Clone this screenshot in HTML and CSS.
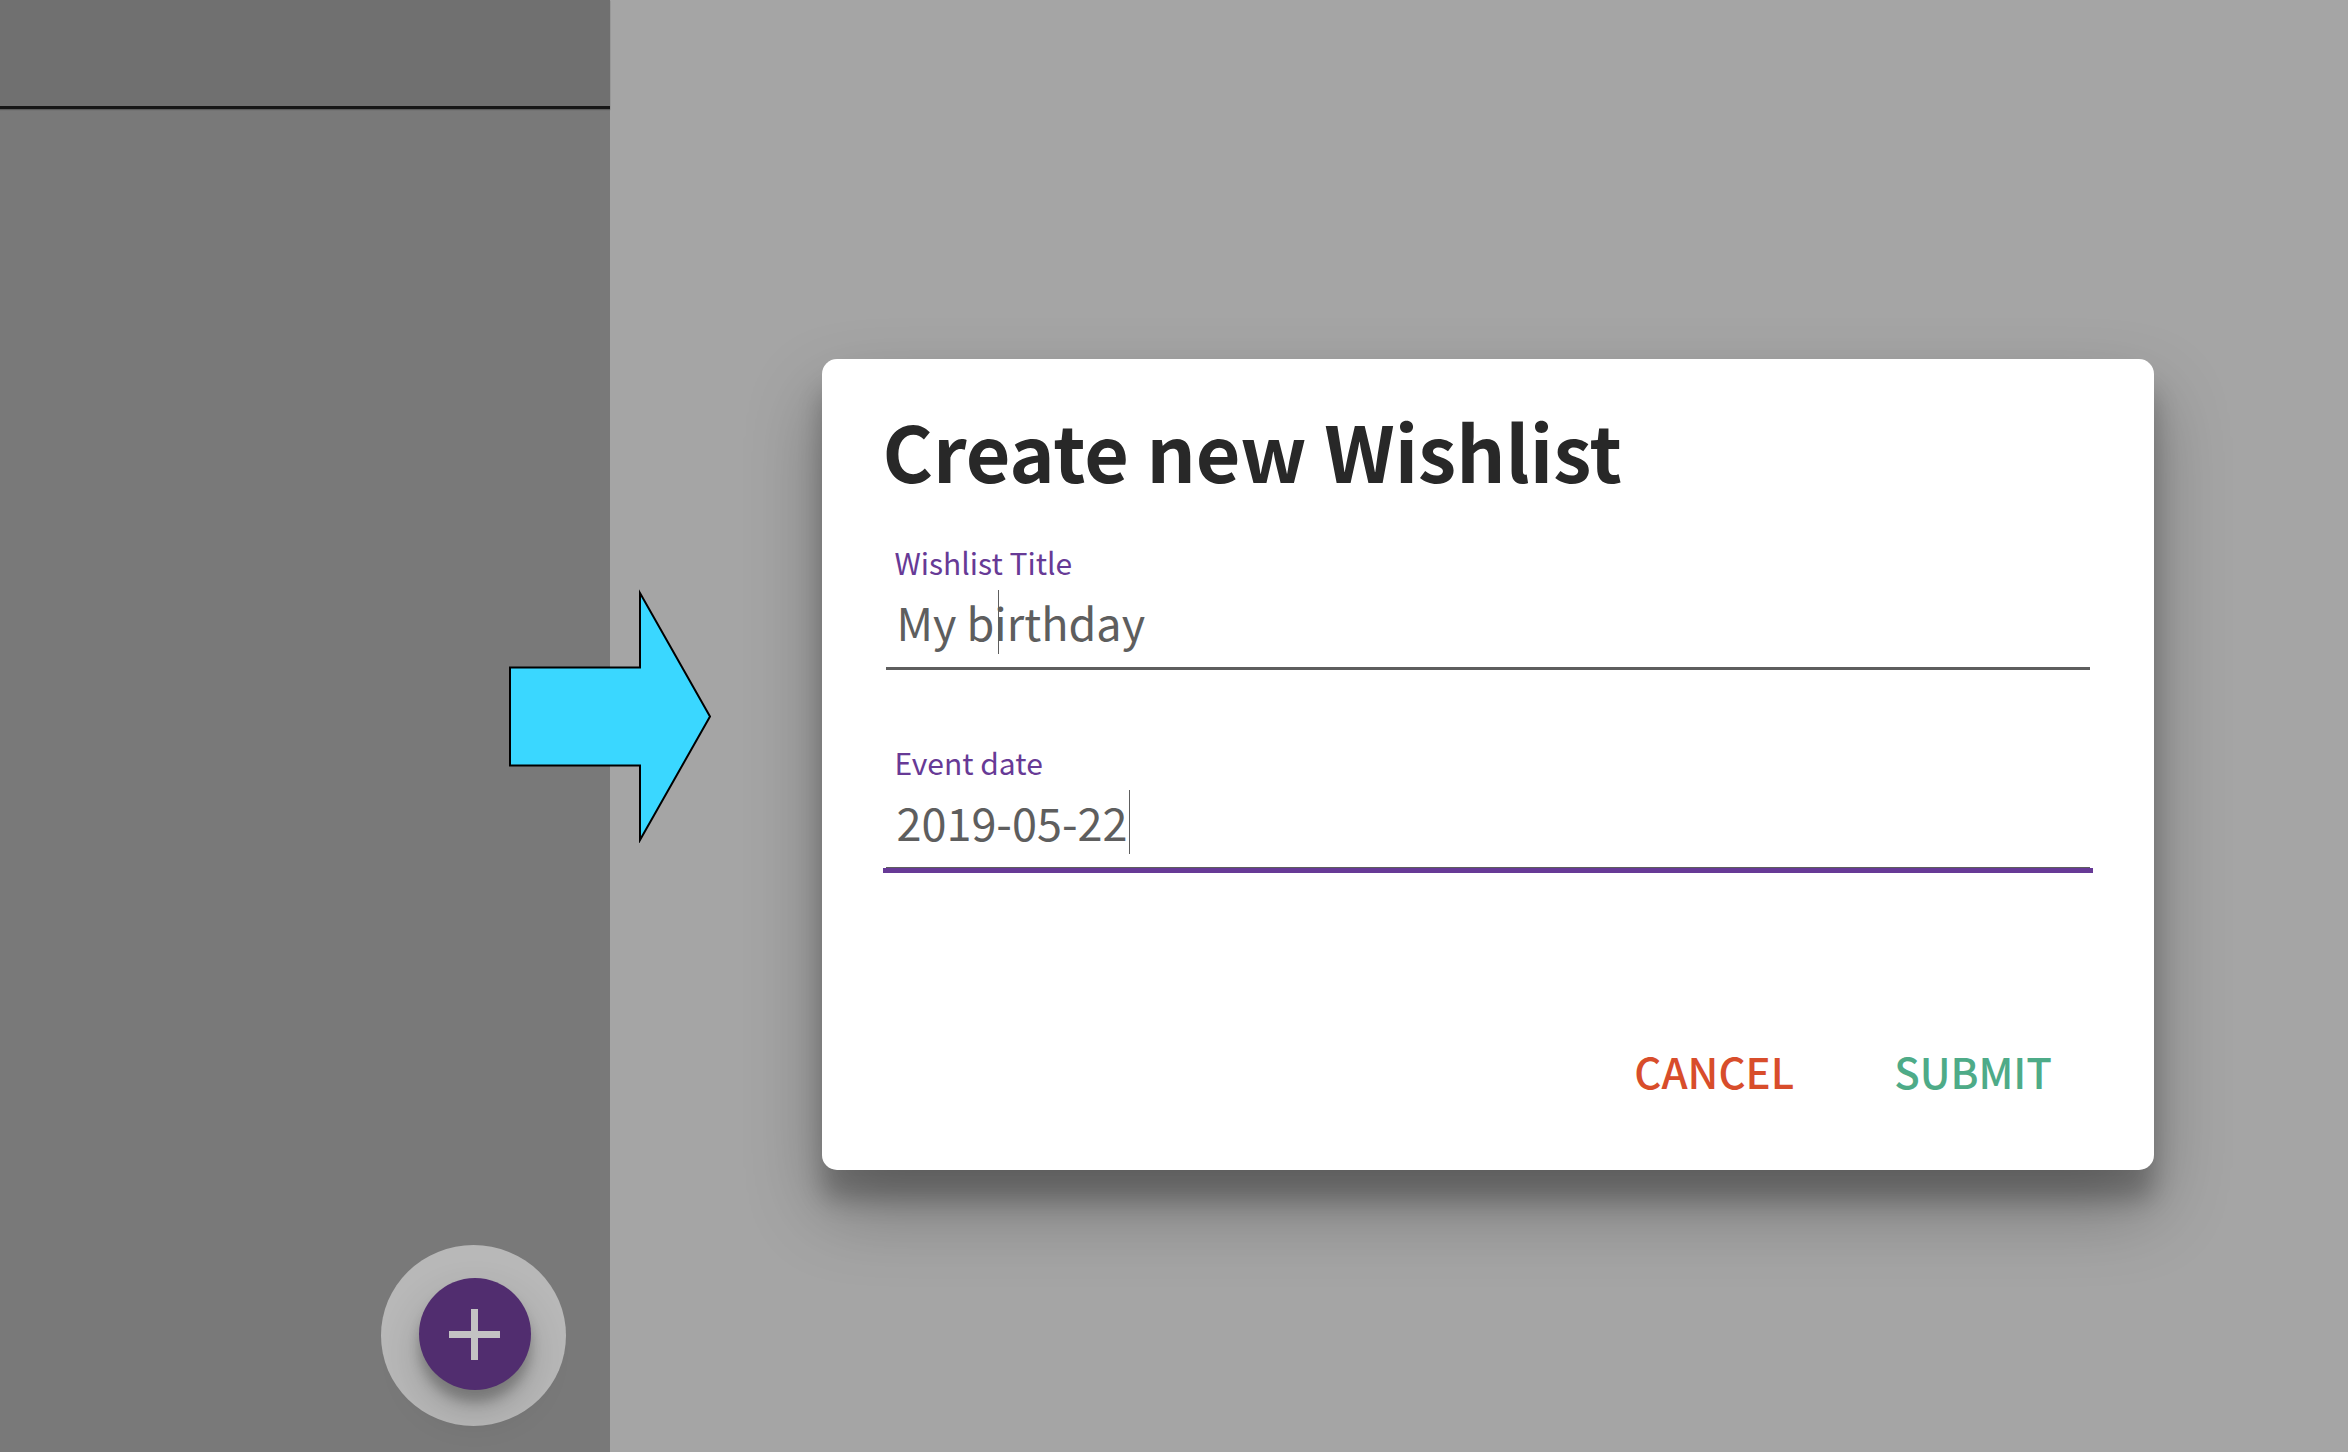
FILE: index.html
```html
<!DOCTYPE html>
<html lang="en">
<head>
<meta charset="utf-8">
<meta name="viewport" content="width=device-width, initial-scale=1">
<title>Create new Wishlist</title>
<link rel="stylesheet" href="styles.css">
</head>
<body>
<div class="app">
  <aside class="sidebar">
    <header class="sidebar-header"></header>
    <div class="sidebar-body">
      <div class="fab-halo">
        <button class="fab" type="button" aria-label="Add wishlist">
          <svg class="fab-icon" viewBox="0 0 51 51" aria-hidden="true"><path d="M22 0h7v22h22v7H29v22h-7V29H0v-7h22z"/></svg>
        </button>
      </div>
    </div>
  </aside>
  <main class="content">
    <form class="dialog" role="dialog" aria-labelledby="dialog-title">
      <h1 class="dialog-title" id="dialog-title">Create new Wishlist</h1>
      <div class="field">
        <label class="field-label" for="wishlist-title">Wishlist Title</label>
        <div class="field-box">
          <input class="field-input" id="wishlist-title" type="text" value="My birthday">
          <span class="caret caret-title"></span>
        </div>
      </div>
      <div class="field field-active">
        <label class="field-label" for="event-date">Event date</label>
        <div class="field-box">
          <input class="field-input" id="event-date" type="text" value="2019-05-22">
          <span class="caret caret-date"></span>
        </div>
      </div>
      <div class="actions">
        <button class="action action-cancel" type="button">CANCEL</button>
        <button class="action action-submit" type="button">SUBMIT</button>
      </div>
    </form>
  </main>
  <svg class="arrow" viewBox="0 0 206 254" aria-hidden="true"><path d="M3 78.500H133V4L203 127.500L133 251V176.500H3Z"/></svg>
</div>
</body>
</html>
```
FILE: styles.css
```css
* { box-sizing: border-box; }

body {
  margin: 0;
  background: #a5a5a5;
  font-family: "Noto Sans CJK JP", "Noto Sans", sans-serif;
}

.app {
  position: relative;
  display: grid;
  grid-template-columns: 26fr 74fr;
  min-height: 100vh;
  overflow: hidden;
}

.sidebar {
  display: flex;
  flex-direction: column;
  background: #797979;
}

.sidebar-header {
  height: 109px;
  background: #707070;
  border-bottom: 3px solid #161616;
  box-shadow: 0 1px 1px #5c5c5c;
}

.sidebar-body {
  flex: 1;
  display: flex;
  justify-content: flex-end;
  align-items: flex-end;
  padding: 0 44px 26px;
}

.fab-halo {
  display: flex;
  justify-content: center;
  width: 185px;
  height: 181px;
  padding: 33px 0 0 2px;
  border-radius: 50%;
  background: #b8b8b8;
}

.fab {
  display: grid;
  place-items: center;
  width: 112px;
  height: 112px;
  padding: 0;
  border: 0;
  border-radius: 50%;
  background: #512d6f;
  box-shadow: 0 20px 40px rgba(0, 0, 0, .19), 0 12px 12px rgba(0, 0, 0, .23);
}

.fab-icon {
  width: 51px;
  height: 51px;
  fill: #c3c3c3;
}

.content {
  padding: 359px 194px 120px 212px;
}

.dialog {
  padding: 43px 60px 69px;
  border-radius: 15px;
  background: #fff;
  box-shadow: 0 38px 76px rgba(0, 0, 0, .3), 0 30px 24px rgba(0, 0, 0, .22);
}

.dialog-title {
  margin: 0 0 40px;
  font-size: 77px;
  font-weight: 700;
  line-height: 96px;
  padding-bottom: 4px;
  color: #282828;
}

.field {
  margin-bottom: 72px;
}

.field-label {
  display: block;
  margin-bottom: 7px;
  padding-left: 12px;
  font-size: 30px;
  line-height: 40px;
  color: #673a96;
}

.field-box {
  position: relative;
  margin: 0 4px;
}

.field-input {
  display: block;
  width: 100%;
  height: 81px;
  padding: 0 10px 14px;
  border: 0;
  border-bottom: 3px solid #5e5e5e;
  outline: 0;
  background: none;
  font-family: inherit;
  font-size: 45px;
  line-height: 64px;
  color: #5e5e5e;
}

.field-active {
  margin-bottom: 172px;
}

.field-active .field-input {
  height: 80px;
  border-bottom-width: 2px;
}

.field-active .field-box::after {
  content: "";
  position: absolute;
  left: -3px;
  right: -3px;
  top: 79px;
  height: 5px;
  background: #673a96;
}

.caret {
  position: absolute;
  top: 1px;
  width: 1px;
  height: 64px;
  background: #5e5e5e;
}

.caret-title { left: 112px; }
.caret-date { left: 243px; }

.actions {
  display: flex;
  justify-content: flex-end;
  gap: 100px;
  padding-right: 42px;
}

.action {
  padding: 0;
  border: 0;
  background: none;
  font-family: inherit;
  font-size: 42px;
  font-weight: 500;
  line-height: 60px;
}

.action-cancel { color: #d84d2b; }
.action-submit { color: #4eab88; }

.arrow {
  position: absolute;
  left: 507px;
  top: 589px;
  width: 206px;
  height: 254px;
  fill: #3ad7ff;
  stroke: #000;
  stroke-width: 2;
}
```
